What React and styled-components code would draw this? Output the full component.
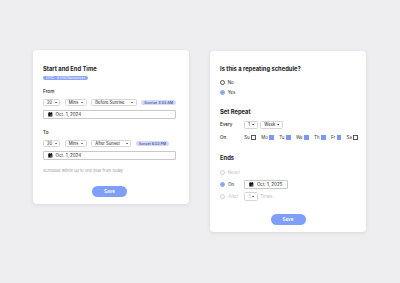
import styled, { createGlobalStyle } from "styled-components";

const Global = createGlobalStyle`
  html, body { margin: 0; padding: 0; background: #eeeef0; }
  body { font-family: Inter, "Noto Sans", sans-serif; color: #1c1c1e; }
  * { box-sizing: border-box; }
`;

const Page = styled.main`
  width: 400px;
  height: 283px;
  display: flex;
  align-items: flex-start;
  gap: 21px;
  padding: 50px 0 0 33px;
`;

const Card = styled.section`
  width: 156px;
  flex: none;
  margin-top: ${p => p.$offset || 0}px;
  background: #fff;
  border-radius: 4px;
  box-shadow: 0 1px 4px rgba(0, 0, 0, 0.09);
  padding: ${p => p.$pad};
  display: flex;
  flex-direction: column;
  align-items: flex-start;
`;

const Title = styled.h2`
  margin: ${p => p.$mt || 0}px 0 0;
  font-size: 5.8px;
  line-height: 8px;
  font-weight: 700;
  white-space: nowrap;
`;

const Label = styled.div`
  margin-top: ${p => p.$mt || 0}px;
  font-size: 4.7px;
  line-height: 6px;
  font-weight: 500;
`;

const Badge = styled.span`
  display: inline-flex;
  align-items: center;
  flex: none;
  height: ${p => (p.$strong ? 4.5 : 5)}px;
  margin-top: ${p => p.$mt || 0}px;
  padding: 0 3px;
  border-radius: 3px;
  font-size: 3.6px;
  font-weight: 500;
  white-space: nowrap;
  background: ${p => (p.$strong ? "#8ea6f6" : "#d2dafb")};
  color: ${p => (p.$strong ? "#eef2ff" : "#3a4a8c")};
`;

const Row = styled.div`
  display: flex;
  align-items: center;
  flex: none;
  gap: ${p => p.$gap ?? 4}px;
  margin-top: ${p => p.$mt || 0}px;
  height: ${p => p.$h || 7.5}px;
  white-space: nowrap;
`;

const SelectBox = styled.div`
  display: flex;
  align-items: center;
  justify-content: space-between;
  flex: none;
  width: ${p => p.$w}px;
  height: ${p => p.$h || 7.5}px;
  padding: 0 2.5px 0 3px;
  border: 0.7px solid #d6d6d9;
  border-radius: 1.5px;
  font-size: 4.2px;
  color: ${p => (p.$disabled ? "#b8b8bc" : "#222")};
  white-space: nowrap;
`;

const DateBox = styled.div`
  display: flex;
  align-items: center;
  flex: none;
  gap: 3px;
  width: ${p => p.$w}px;
  height: ${p => p.$h || 8.5}px;
  margin-top: ${p => p.$mt || 0}px;
  padding: 0 4px;
  border: 0.7px solid #c9c9cd;
  border-radius: 1px;
  font-size: 4.5px;
  color: #1c1c1e;
  white-space: nowrap;
`;

const Helper = styled.div`
  margin-top: ${p => p.$mt || 0}px;
  font-size: 4px;
  line-height: 5px;
  color: #9a9aa0;
  white-space: nowrap;
`;

const SaveButton = styled.button`
  align-self: center;
  margin-top: ${p => p.$mt || 0}px;
  width: 35px;
  height: 11px;
  padding: 0;
  border: none;
  border-radius: 6px;
  background: #7f9ef7;
  color: #fff;
  font-family: Inter, sans-serif;
  font-size: 4.6px;
  font-weight: 600;
`;

const RadioRow = styled.div`
  display: flex;
  align-items: center;
  gap: ${p => p.$gap ?? 2.5}px;
  margin-top: ${p => p.$mt || 0}px;
  height: ${p => p.$h || 6}px;
  font-size: 4.4px;
  white-space: nowrap;
  color: ${p => (p.$disabled ? "#c2c2c6" : "#222")};
`;

const RadioLabel = styled.div`
  display: flex;
  align-items: center;
  gap: 3px;
  width: 24.3px;
  flex: none;
`;

const Radio = styled.span`
  width: 5.2px;
  height: 5.2px;
  border-radius: 50%;
  flex: none;
  border: 0.6px solid ${p => (p.$checked ? "#7f9ef7" : p.$disabled ? "#cfcfd3" : "#555")};
  display: flex;
  align-items: center;
  justify-content: center;
  &::after {
    content: "";
    width: 2.8px;
    height: 2.8px;
    border-radius: 50%;
    background: ${p => (p.$checked ? "#7f9ef7" : "transparent")};
  }
`;

const FieldName = styled.div`
  width: 24.3px;
  flex: none;
  font-size: 4.6px;
  font-weight: 500;
`;

const Days = styled.div`
  display: flex;
  align-items: center;
  gap: 5.4px;
`;

const Day = styled.div`
  display: flex;
  align-items: center;
  gap: 1.6px;
  font-size: 4.4px;
  color: #333;
`;

const Check = styled.span`
  width: 4.5px;
  height: 4.5px;
  flex: none;
  border: 0.6px solid ${p => (p.$on ? "#7b98f3" : "#555")};
  background: ${p => (p.$on ? "#7b98f3" : "#fff")};
`;

const Muted = styled.span`
  color: #b8b8bc;
`;

const Caret = () => (
  <svg width="2.2" height="1.5" viewBox="0 0 6 4">
    <polygon points="0,0 6,0 3,4" fill="#444" />
  </svg>
);

const CalendarIcon = () => (
  <svg width="4.6" height="4.6" viewBox="0 0 10 10">
    <rect x="0.5" y="1" width="9" height="8.8" rx="0.8" fill="#111" />
    <rect x="2.2" y="0" width="1.2" height="2.2" fill="#111" />
    <rect x="6.6" y="0" width="1.2" height="2.2" fill="#111" />
    <rect x="5.6" y="5.8" width="2" height="2" fill="#fff" />
  </svg>
);

const Select = ({ value, w, h, disabled }) => (
  <SelectBox $w={w} $h={h} $disabled={disabled}>
    {value}
    <Caret />
  </SelectBox>
);

const TimeRow = ({ mt, event, eventW, badge }) => (
  <Row $mt={mt} $gap={4.5}>
    <Select value="20" w={17.3} />
    <Select value="Mins" w={22} />
    <Select value={event} w={eventW} />
    <Badge>{badge}</Badge>
  </Row>
);

const days = [
  ["Su", false],
  ["Mo", true],
  ["Tu", true],
  ["We", true],
  ["Th", true],
  ["Fr", true],
  ["Sa", false],
];

export default function App() {
  return (
    <>
      <Global />
      <Page>
        <Card $pad="15px 13px 7px 10px">
          <Title>Start and End Time</Title>
          <Badge $strong $mt={2.5}>UTC - 8 US/Vancouver</Badge>
          <Label $mt={7.7}>From</Label>
          <TimeRow mt={5.3} event="Before Sunrise" eventW={45.4} badge="Sunrise 4:03 AM" />
          <DateBox $w={133} $mt={4}>
            <CalendarIcon />
            Oct. 1, 2024
          </DateBox>
          <Label $mt={10}>To</Label>
          <TimeRow mt={5} event="After Sunset" eventW={40} badge="Sunset 6:03 PM" />
          <DateBox $w={133} $mt={4}>
            <CalendarIcon />
            Oct. 1, 2024
          </DateBox>
          <Helper $mt={8}>Schedule within up to one year from today</Helper>
          <SaveButton $mt={12.7}>Save</SaveButton>
        </Card>

        <Card $pad="14px 10px 7px 10px" $offset={1}>
          <Title>Is this a repeating schedule?</Title>
          <RadioRow $mt={6.7}>
            <Radio />
            No
          </RadioRow>
          <RadioRow $mt={4}>
            <Radio $checked />
            Yes
          </RadioRow>

          <Title $mt={12}>Set Repeat</Title>
          <Row $mt={5.3} $h={8} $gap={0}>
            <FieldName>Every</FieldName>
            <Row $gap={2.6} $h={8}>
              <Select value="1" w={13.4} h={8} />
              <Select value="Week" w={22.4} h={8} />
            </Row>
          </Row>
          <Row $mt={5.7} $h={6} $gap={0}>
            <FieldName>On</FieldName>
            <Days>
              {days.map(([d, on]) => (
                <Day key={d}>
                  {d}
                  <Check $on={on} />
                </Day>
              ))}
            </Days>
          </Row>

          <Title $mt={13}>Ends</Title>
          <RadioRow $mt={8} $disabled>
            <Radio $disabled />
            Never
          </RadioRow>
          <RadioRow $mt={4.6} $h={9} $gap={0}>
            <RadioLabel>
              <Radio $checked />
              On
            </RadioLabel>
            <DateBox $w={43.5} $h={8.7}>
              <CalendarIcon />
              Oct. 1, 2025
            </DateBox>
          </RadioRow>
          <RadioRow $mt={3} $h={8.7} $gap={0} $disabled>
            <RadioLabel>
              <Radio $disabled />
              After
            </RadioLabel>
            <Row $gap={2} $h={8.7}>
              <Select value="3" w={13.7} h={8.7} disabled />
              <Muted>Times</Muted>
            </Row>
          </RadioRow>
          <SaveButton $mt={12.6}>Save</SaveButton>
        </Card>
      </Page>
    </>
  );
}
